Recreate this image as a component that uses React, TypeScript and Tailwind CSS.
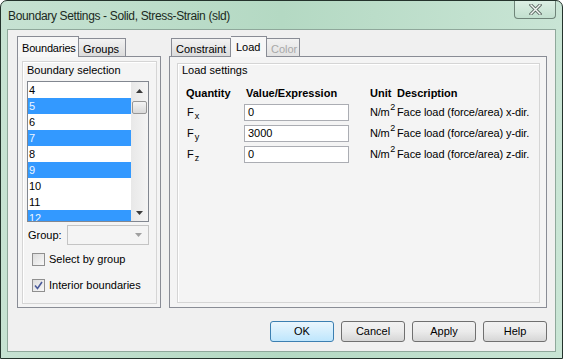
import React from 'react';

const font = { fontFamily: '"Liberation Sans", Arial, sans-serif' };

function Check({ checked, label }: { checked?: boolean; label: string }) {
  return (
    <div className="flex items-center h-[13px] ml-[5px]">
      <div className="w-[13px] h-[13px] border border-[#8f8f8f] bg-gradient-to-br from-[#dcdcdc] to-[#f8f8f8] flex items-center justify-center">
        {checked && (
          <svg width="9" height="9" viewBox="0 0 9 9">
            <path d="M1 4.5 L3.5 7.5 L8 1" fill="none" stroke="#4a5a9a" strokeWidth="1.6" />
          </svg>
        )}
      </div>
      <span className="ml-[4px] text-[11px] leading-[13px]">{label}</span>
    </div>
  );
}

function Btn({ label, def }: { label: string; def?: boolean }) {
  return (
    <div
      className={
        'w-[64px] h-[21px] rounded-[3px] border flex items-center justify-center text-[11px] ' +
        (def
          ? 'border-[#3c7fb1] bg-gradient-to-b from-[#eaf6fd] to-[#bee6fd]'
          : 'border-[#707070] bg-gradient-to-b from-[#f2f2f2] via-[#ebebeb] to-[#d6d6d6]')
      }
    >
      {label}
    </div>
  );
}

function Row({ sub, value }: { sub: string; value: string }) {
  return (
    <div className="flex items-center h-[21px] text-[11px] leading-[13px]">
      <div className="w-[58px] shrink-0 pl-[1px] flex items-start">
        <span>F</span>
        <span className="text-[9px] leading-none relative top-[6px] ml-[1px]">{sub}</span>
      </div>
      <div className="w-[126px] shrink-0">
        <div className="w-[105px] h-[17px] border border-[#abadb3] bg-white leading-[15px] pl-[3px]">
          {value}
        </div>
      </div>
      <div className="w-[27px] shrink-0 whitespace-nowrap flex items-start tracking-[-0.3px]">
        <span>N/m</span>
        <span className="text-[9px] leading-none relative -top-[3px] ml-[1px]">2</span>
      </div>
      <div className="whitespace-nowrap tracking-[-0.1px]">Face load (force/area) {sub}-dir.</div>
    </div>
  );
}

export default function App() {
  const items = [4, 5, 6, 7, 8, 9, 10, 11, 12];
  const sel = [5, 7, 9, 12];
  return (
    <div
      style={font}
      className="w-[563px] h-[359px] border border-[#24332c] rounded-t-[7px] bg-gradient-to-r from-[#c6e2d2] via-[#b4d9c3] to-[#c9e5d5] flex flex-col text-black overflow-hidden"
    >
      {/* title bar */}
      <div className="h-[28px] flex items-start relative">
        <span className="ml-[7px] mt-[6px] text-[12px] tracking-[-0.35px] text-[#1b2a22]">
          Boundary Settings - Solid, Stress-Strain (sld)
        </span>
        <div className="absolute right-[6px] top-0 w-[42px] h-[18px] border border-t-0 border-[#6f8479] rounded-b-[4px] bg-gradient-to-b from-[#dcefe4] to-[#c2e0cf] flex items-center justify-center">
          <svg width="13" height="11" viewBox="0 0 13 11">
            <path d="M2 1 L11 10 M11 1 L2 10" stroke="#5c6a63" strokeWidth="3.2" strokeLinecap="square" />
            <path d="M2 1 L11 10 M11 1 L2 10" stroke="#f4f7f5" strokeWidth="1.4" strokeLinecap="square" />
          </svg>
        </div>
      </div>

      {/* client area */}
      <div className="mx-[6px] mb-[6px] flex-1 border border-[#8fa89b] bg-[#f0f0f0] flex flex-col pt-[5px] pl-[9px] pr-[8px]">
        <div className="flex gap-[8px]">
          {/* left tab control */}
          <div className="w-[144px] flex flex-col">
            <div className="flex items-end h-[21px] text-[11px]">
              <div className="relative z-10 w-[62px] h-[21px] border border-b-0 border-[#898c95] bg-[#f7f7f7] pl-[4px] pt-[3px] -mb-px pb-px whitespace-nowrap tracking-[-0.2px]">
                Boundaries
              </div>
              <div className="w-[47px] h-[18px] border border-l-0 border-b-0 border-[#898c95] bg-gradient-to-b from-[#f2f2f2] to-[#dcdcdc] pl-[4px] pt-[2px]">
                Groups
              </div>
            </div>
            <div className="h-[252px] border border-[#898c95] bg-[#f4f4f4] pl-[4px] pt-[4px] pr-[3px] pb-[3px]">
              <div className="h-full border border-[#d5d5d5] shadow-[inset_1px_1px_0_#ffffff] pl-[4px]">
                <div className="text-[11px] leading-[12px] mt-[2px]">Boundary selection</div>
                <div className="mt-[5px] w-[122px] h-[141px] border border-[#828790] bg-white flex">
                  <div className="flex-1 overflow-hidden">
                    {items.map((n) => (
                      <div
                        key={n}
                        className={
                          'h-[16px] text-[11px] leading-[16px] pl-[1px] ' +
                          (sel.includes(n) ? 'bg-[#3399ff] text-[#eef6ff]' : '')
                        }
                      >
                        {n}
                      </div>
                    ))}
                  </div>
                  <div className="w-[17px] bg-gradient-to-r from-[#e8e8e8] to-[#f4f4f4] flex flex-col items-center">
                    <div className="h-[17px] flex items-center justify-center">
                      <svg width="7" height="4" viewBox="0 0 7 4">
                        <path d="M0 4 L3.5 0 L7 4 Z" fill="#3b3b3b" />
                      </svg>
                    </div>
                    <div className="mt-[2px] w-[15px] h-[13px] rounded-[2px] border border-[#979797] bg-gradient-to-b from-[#f4f4f4] to-[#d9d9d9]" />
                    <div className="flex-1" />
                    <div className="h-[17px] flex items-center justify-center">
                      <svg width="7" height="4" viewBox="0 0 7 4">
                        <path d="M0 0 L3.5 4 L7 0 Z" fill="#3b3b3b" />
                      </svg>
                    </div>
                  </div>
                </div>
                <div className="mt-[3px] flex items-center h-[20px]">
                  <span className="text-[11px] ml-px w-[39px]">Group:</span>
                  <div className="w-[82px] h-[20px] border border-[#c4c4c4] bg-[#f4f4f4] flex items-center justify-end pr-[6px]">
                    <svg width="7" height="4" viewBox="0 0 7 4">
                      <path d="M0 0 L3.5 4 L7 0 Z" fill="#a0a0a0" />
                    </svg>
                  </div>
                </div>
                <div className="mt-[8px]">
                  <Check label="Select by group" />
                </div>
                <div className="mt-[13px]">
                  <Check checked label="Interior boundaries" />
                </div>
              </div>
            </div>
          </div>

          {/* right tab control */}
          <div className="w-[378px] flex flex-col">
            <div className="flex items-end h-[21px] text-[11px] pl-[2px]">
              <div className="w-[60px] h-[18px] border border-b-0 border-[#898c95] bg-gradient-to-b from-[#f2f2f2] to-[#dcdcdc] pl-[4px] pt-[2px]">
                Constraint
              </div>
              <div className="relative z-10 w-[36px] h-[21px] border border-l-0 border-b-0 border-[#898c95] bg-[#f7f7f7] pl-[5px] pt-[2px] -mb-px pb-px">
                Load
              </div>
              <div className="w-[33px] h-[18px] border border-l-0 border-b-0 border-[#898c95] bg-gradient-to-b from-[#f2f2f2] to-[#e2e2e2] pl-[4px] pt-[2px] text-[#a8a8a8]">
                Color
              </div>
            </div>
            <div className="h-[252px] border border-[#898c95] bg-[#f4f4f4] pl-[7px] pt-[6px] pr-[6px] pb-[4px]">
              <div className="h-full border border-[#d5d5d5] shadow-[inset_1px_1px_0_#ffffff] pl-[4px]">
                <div className="text-[11px] leading-[10px] mt-[1px]">Load settings</div>
                <div className="mt-[9px] pl-[4px]">
                  <div className="flex items-center h-[18px] text-[11px] font-bold">
                    <div className="w-[58px] shrink-0">Quantity</div>
                    <div className="w-[126px] shrink-0 pl-[2px] whitespace-nowrap">Value/Expression</div>
                    <div className="w-[27px] shrink-0 whitespace-nowrap">Unit</div>
                    <div>Description</div>
                  </div>
                  <Row sub="x" value="0" />
                  <Row sub="y" value="3000" />
                  <Row sub="z" value="0" />
                </div>
              </div>
            </div>
          </div>
        </div>

        {/* buttons */}
        <div className="mt-[13px] flex justify-end gap-[7px]">
          <Btn label="OK" def />
          <Btn label="Cancel" />
          <Btn label="Apply" />
          <Btn label="Help" />
        </div>
      </div>
    </div>
  );
}
